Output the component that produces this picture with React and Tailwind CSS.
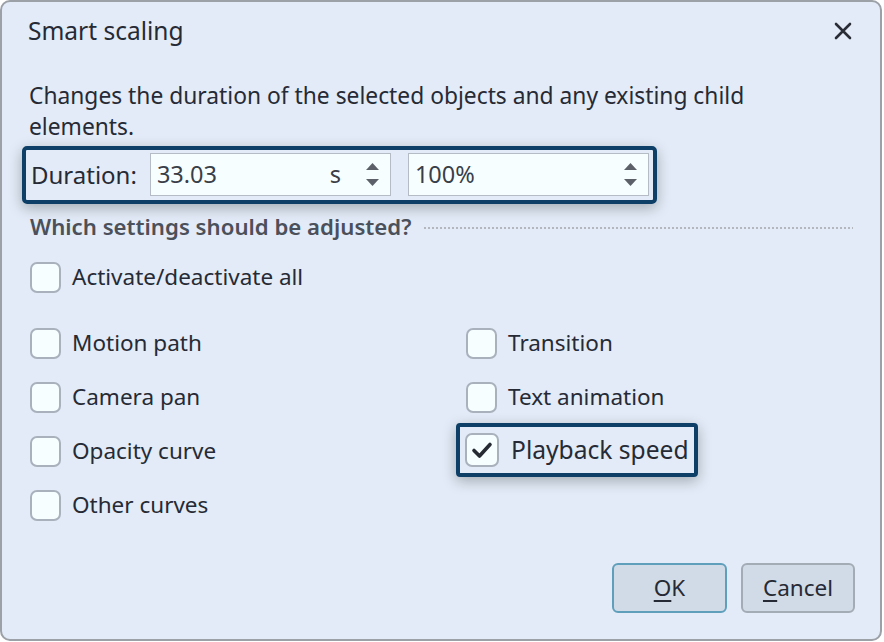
import { useState } from 'react';

const font = { fontFamily: '"Noto Sans", "Open Sans", sans-serif' };

function Box({ checked, big }) {
    return (
        <span className={`flex shrink-0 items-center justify-center rounded-[7px] border-2 border-[#a9b1bd] bg-[#f6feff] ${big ? 'h-[34px] w-[34px]' : 'h-[31px] w-[31px]'}`}>
            {checked && (
                <svg width="22" height="22" viewBox="0 0 22 22">
                    <path d="M3 11.5 L8.5 17 L19 5.5" fill="none" stroke="#262a33" strokeWidth="3.6" strokeLinecap="round" strokeLinejoin="round" />
                </svg>
            )}
        </span>
    );
}

function Check({ label, checked, onClick }) {
    return (
        <button onClick={onClick} className="flex h-[54px] items-center gap-[11px] text-left text-[22.5px] text-[#262a35]">
            <Box checked={checked} />
            <span>{label}</span>
        </button>
    );
}

function Spin({ value, unit }) {
    return (
        <div className="flex h-[43px] w-[241px] items-center border border-[#b6bcc6] bg-[#f7feff] pl-[6px] pr-[11px] text-[23.5px] text-[#3a3e47]">
            <span className="flex-1">{value}</span>
            {unit && <span className="mr-[25px]">{unit}</span>}
            <div className="flex flex-col items-center gap-[9px]">
                <svg width="13" height="7" viewBox="0 0 13 7"><path d="M0 7 L6.5 0 L13 7 Z" fill="#5c6068" /></svg>
                <svg width="13" height="7" viewBox="0 0 13 7"><path d="M0 0 L6.5 7 L13 0 Z" fill="#5c6068" /></svg>
            </div>
        </div>
    );
}

export default function App() {
    const [checks, setChecks] = useState({ playback: true });
    const toggle = (k) => setChecks((c) => ({ ...c, [k]: !c[k] }));

    return (
        <div style={font} className="h-[642px] w-[884px] bg-white">
            <div className="flex h-[641px] w-[882px] flex-col rounded-[10px] border-2 border-[#9ca0a7] bg-[#e2ebf7]">
                <header className="flex h-[58px] shrink-0 items-center justify-between pl-[26px] pr-[28px]">
                    <h1 className="text-[24.5px] text-[#262a35]">Smart scaling</h1>
                    <button>
                        <svg width="18" height="18" viewBox="0 0 18 18">
                            <path d="M2 2 L16 16 M16 2 L2 16" stroke="#2a2d35" strokeWidth="2.6" strokeLinecap="round" />
                        </svg>
                    </button>
                </header>

                <div className="flex flex-1 flex-col pl-[20px] pr-[27px]">
                    <p className="mt-[20px] pl-[7px] text-[22.8px] leading-[31px] text-[#262a35]">
                        Changes the duration of the selected objects and any existing child
                        <br />
                        elements.
                    </p>

                    <div className="mt-[4px] flex w-[635px] items-center gap-[17px] rounded-[5px] border-4 border-[#0e3f66] p-[3px] pb-[4px] pl-[5px] shadow-[0_4px_14px_rgba(0,0,0,0.28)]">
                        <div className="flex items-center gap-[13px]">
                            <span className="text-[24px] text-[#262a35]">Duration:</span>
                            <Spin value="33.03" unit="s" />
                        </div>
                        <Spin value="100%" />
                    </div>

                    <div className="mt-[6px] flex items-center gap-[13px] pl-[8px]">
                        <span className="text-[22.2px] font-semibold text-[#4b505a]">Which settings should be adjusted?</span>
                        <div className="mt-[3px] h-[2px] flex-1 bg-[linear-gradient(to_right,#b3b8bf_55%,transparent_55%)] bg-[length:4px_2px]" />
                    </div>

                    <div className="mt-[7px] pl-[8px]">
                        <Check label="Activate/deactivate all" checked={checks.all} onClick={() => toggle('all')} />
                    </div>

                    <div className="mt-[12px] grid grid-cols-[436px_1fr] pl-[8px]">
                        <div className="flex flex-col">
                            <Check label="Motion path" checked={checks.motion} onClick={() => toggle('motion')} />
                            <Check label="Camera pan" checked={checks.camera} onClick={() => toggle('camera')} />
                            <Check label="Opacity curve" checked={checks.opacity} onClick={() => toggle('opacity')} />
                            <Check label="Other curves" checked={checks.other} onClick={() => toggle('other')} />
                        </div>
                        <div className="flex flex-col">
                            <Check label="Transition" checked={checks.transition} onClick={() => toggle('transition')} />
                            <Check label="Text animation" checked={checks.text} onClick={() => toggle('text')} />
                            <div className="-ml-[10px] flex h-[54px] items-center">
                                <button
                                    onClick={() => toggle('playback')}
                                    className="-mt-[2px] flex h-[54px] items-center gap-[12px] rounded-[4px] border-4 border-[#0e3f66] pl-[5px] pr-[5px] shadow-[0_4px_14px_rgba(0,0,0,0.28)]"
                                >
                                    <Box checked={checks.playback} big />
                                    <span className="text-[24.6px] text-[#262a35]">Playback speed</span>
                                </button>
                            </div>
                        </div>
                    </div>

                    <div className="mt-auto mb-[26px] -mr-[2px] flex justify-end gap-[14px]">
                        <button className="h-[50px] w-[115px] rounded-[6px] border-2 border-[#5f9fbc] bg-[#d1dbe7] text-[22.5px] text-[#262a35]">
                            <span className="underline underline-offset-[4px]">O</span>K
                        </button>
                        <button className="h-[50px] w-[114px] rounded-[6px] border-2 border-[#a3abb5] bg-[#d1dbe7] text-[22.5px] text-[#262a35]">
                            <span className="underline underline-offset-[4px]">C</span>ancel
                        </button>
                    </div>
                </div>
            </div>
        </div>
    );
}
